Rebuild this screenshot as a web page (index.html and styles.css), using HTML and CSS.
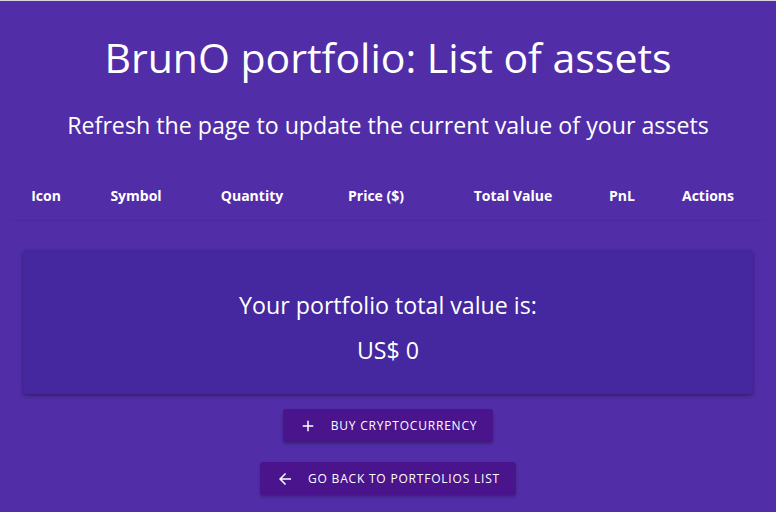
FILE: index.html
```html
<!DOCTYPE html>
<html>
<head>
<meta charset="utf-8">
<link rel="stylesheet" href="styles.css">
</head>
<body>
<div class="page">
  <h1 class="title">BrunO portfolio: List of assets</h1>
  <h2 class="subtitle">Refresh the page to update the current value of your assets</h2>
  <table class="assets">
    <thead>
      <tr>
        <th class="c-icon">Icon</th>
        <th class="c-sym">Symbol</th>
        <th class="c-qty">Quantity</th>
        <th class="c-price">Price ($)</th>
        <th class="c-total">Total Value</th>
        <th class="c-pnl">PnL</th>
        <th class="c-act">Actions</th>
      </tr>
    </thead>
  </table>
  <div class="card">
    <div class="card-line">Your portfolio total value is:</div>
    <div class="card-line">US$ 0</div>
  </div>
  <div class="actions">
    <button class="btn btn-buy"><svg class="ic" viewBox="0 0 24 24" width="18" height="18"><path d="M19 13h-6v6h-2v-6H5v-2h6V5h2v6h6v2z" fill="#fff"/></svg><span>Buy cryptocurrency</span></button>
    <button class="btn btn-back"><svg class="ic" viewBox="0 0 24 24" width="18" height="18"><path d="M20 11H7.83l5.59-5.59L12 4l-8 8 8 8 1.41-1.41L7.83 13H20v-2z" fill="#fff"/></svg><span>Go back to portfolios list</span></button>
  </div>
</div>
</body>
</html>
```
FILE: styles.css
```css
html, body {
  margin: 0;
  padding: 0;
  height: 100%;
}
body {
  background: #512da8;
  border-top: 1px solid #d8d4e0;
  box-sizing: border-box;
  font-family: "Open Sans", "Noto Sans", sans-serif;
  color: #fff;
  overflow: hidden;
}
.page {
  display: flex;
  flex-direction: column;
  align-items: center;
  padding: 0 8px;
}
.title {
  margin: 30px 0 0;
  font-size: 41px;
  font-weight: 400;
  line-height: 52px;
}
.subtitle {
  margin: 26px 0 0;
  font-size: 23.2px;
  font-weight: 400;
  line-height: 32px;
}
.assets {
  width: 754px;
  margin-top: 29px;
  border-collapse: collapse;
  table-layout: fixed;
}
.assets th {
  font-size: 14px;
  font-weight: 700;
  height: 50px;
  border-bottom: 1px solid #4a2a9e;
  text-align: center;
  padding: 0;
}
.c-icon { width: 70px; }
.c-sym { width: 110px; }
.c-qty { width: 122px; }
.c-price { width: 126px; }
.c-total { width: 148px; }
.c-pnl { width: 70px; }
.c-act { width: 102px; }
.assets th.c-act { padding-right: 6px; }
.card {
  width: 730px;
  margin-top: 29px;
  background: #4527a0;
  box-shadow: 0 2px 4px rgba(0,0,0,0.25), 0 1px 2px rgba(0,0,0,0.15);
  border-radius: 3px;
  padding: 39px 0 28px;
  display: flex;
  flex-direction: column;
  align-items: center;
  gap: 13px;
}
.card-line {
  font-size: 23.2px;
  line-height: 32px;
}
.actions {
  margin-top: 15px;
  display: flex;
  flex-direction: column;
  align-items: center;
  gap: 20px;
}
.btn {
  display: flex;
  align-items: center;
  gap: 14px;
  height: 33px;
  padding: 0 16px;
  background: #4a148c;
  color: #fff;
  border: none;
  border-radius: 3px;
  box-shadow: 0 2px 3px rgba(0,0,0,0.25);
  font-family: "Open Sans", sans-serif;
  font-size: 12px;
  letter-spacing: 0.8px;
  text-transform: uppercase;
}
.ic { display: block; }
```
